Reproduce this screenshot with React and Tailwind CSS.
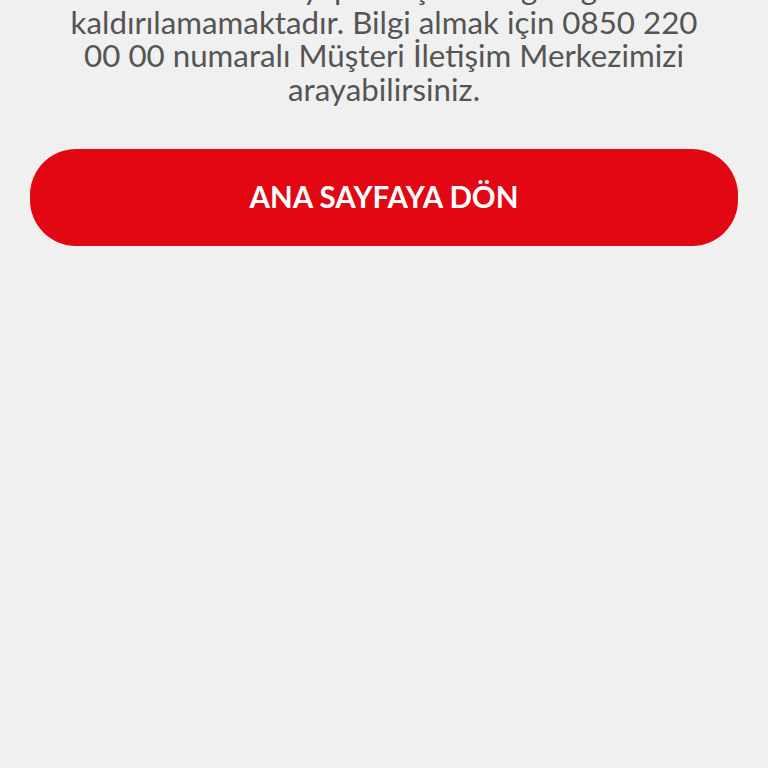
export default function App() {
  return (
    <div className="min-h-[768px] bg-[#f0f0f0] px-[30px] overflow-hidden" style={{ fontFamily: 'Lato, "Noto Sans", sans-serif' }}>
      <p className="-mt-[28px] text-center text-[31.3px] leading-[33.5px] text-[#555]">
        Hattınızın yapılan işlemler gereği
        <br />
        kaldırılamamaktadır. Bilgi almak için 0850 220
        <br />
        00 00 numaralı Müşteri İletişim Merkezimizi
        <br />
        arayabilirsiniz.
      </p>
      <button className="mt-[43px] flex h-[97px] w-full items-center justify-center rounded-[46px] bg-[#e30613] text-[29.5px] font-bold text-white">
        ANA SAYFAYA DÖN
      </button>
    </div>
  )
}
